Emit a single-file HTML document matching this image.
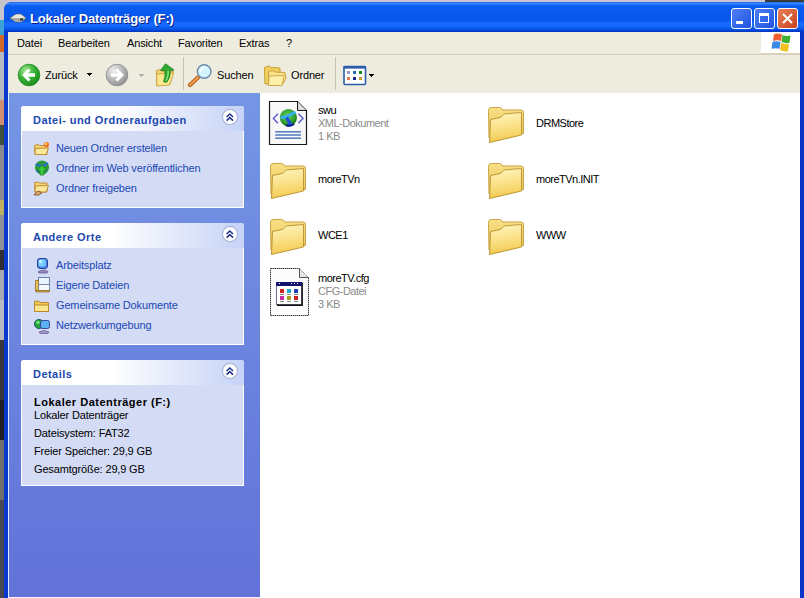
<!DOCTYPE html>
<html><head><meta charset="utf-8">
<style>
*{margin:0;padding:0;box-sizing:border-box}
html,body{width:804px;height:598px;overflow:hidden}
body{position:relative;background:#c9c4cf;font-family:"Liberation Sans",sans-serif;font-size:11px;color:#000}
.a{position:absolute}
.t{position:absolute;white-space:nowrap;line-height:13px;font-size:11px;letter-spacing:-0.15px}
#desk{left:0;top:0;width:6px;height:598px;background:linear-gradient(#c8c4cc 0,#c8c4cc 20px,#3aa0d8 20px,#3aa0d8 35px,#d06828 35px,#d06828 52px,#b8b8c0 52px,#b8b8c0 100px,#d09070 100px,#d09070 125px,#405040 125px,#405040 145px,#8a8a90 145px,#8a8a90 200px,#c0b060 200px,#c0b060 215px,#909098 215px,#909098 250px,#303030 250px,#303030 270px,#a8a8b0 270px,#a8a8b0 300px,#b8b8c0 300px,#b8b8c0 340px,#383838 340px,#383838 400px,#202020 400px,#202020 440px,#707068 440px,#707068 500px,#484850 500px)}
#topstrip{left:765px;top:0;width:39px;height:2px;background:#343c38}
#win{left:4px;top:2px;width:800px;height:600px;background:#0838cc;border-radius:8px 2px 0 0}
#title{left:4px;top:2px;width:800px;height:30px;border-radius:8px 2px 0 0;
 background:linear-gradient(#1a50d8 0px,#3a8cff 1px,#2a7aff 2px,#0a5cf0 4px,#0856ec 19px,#1a6cff 21px,#1468fa 24px,#0a5cf0 26px,#0850e0 28px,#0038c8 29px,#0038c8 30px)}
#ttext{left:30px;top:11px;color:#fff;font-weight:bold;font-size:13px;line-height:15px;text-shadow:1px 1px 0 #0a1e8a}
#menu{left:8px;top:32px;width:792px;height:22px;background:#eeecdf}
#menusep{left:8px;top:54px;width:792px;height:1px;background:#d8d2bd}
#tool{left:8px;top:55px;width:792px;height:38px;background:#eeecdf}
#logo{left:761px;top:32px;width:39px;height:22px;background:#fff}
#pane{left:8px;top:93px;width:252px;height:505px;background:linear-gradient(#7596e4,#6272d9)}
#paneline{left:8px;top:93px;width:1px;height:505px;background:#dceeff}
#botline{left:8px;top:597px;width:252px;height:1px;background:#f4f6fc}
#content{left:260px;top:93px;width:540px;height:505px;background:#fff}
#rborder{left:800px;top:32px;width:4px;height:566px;background:#0834c8}
.box{position:absolute;left:21px;width:223px;background:#fff;border-radius:3px 3px 0 0;overflow:hidden}
.body{position:absolute;left:1px;right:1px;top:25px;bottom:1px;background:#d3dbf5}
.hdr{position:absolute;left:0;top:0;width:223px;height:25px;background:linear-gradient(90deg,#fff 0%,#fff 40%,#c6d3f7 100%)}
.htext{position:absolute;left:12px;top:8px;font-weight:bold;letter-spacing:0.45px;color:#2048b0;font-size:11px;line-height:13px;white-space:nowrap}
.chev{position:absolute;left:202px;top:3px;width:16px;height:16px;border-radius:50%;background:#fff;box-shadow:0 0 1px 1px #b4c2e6}
.f{letter-spacing:-0.5px}
.link{color:#2148b4}
.btn{position:absolute;top:8px;width:21px;height:21px;border:1px solid #fff;border-radius:3px}
</style></head><body>
<div class="a" id="desk"></div>
<div class="a" id="topstrip"></div>
<div class="a" id="win"></div>
<div class="a" id="title"></div>
<div class="t" id="ttext">Lokaler Datenträger (F:)</div>
<div class="a" id="menu"></div>
<div class="a" id="menusep"></div>
<div class="a" id="tool"></div>
<div class="a" id="logo"></div>
<div class="a" id="pane"></div>
<div class="a" id="content"></div>
<div class="a" id="paneline"></div>
<div class="a" id="botline"></div>
<div class="a" id="rborder"></div>

<!-- menu -->
<div class="t" style="left:17px;top:37px">Datei</div>
<div class="t" style="left:58px;top:37px">Bearbeiten</div>
<div class="t" style="left:127px;top:37px">Ansicht</div>
<div class="t" style="left:178px;top:37px">Favoriten</div>
<div class="t" style="left:239px;top:37px">Extras</div>
<div class="t" style="left:286px;top:37px">?</div>

<!-- title buttons -->
<div class="btn" style="left:731px;background:linear-gradient(135deg,#5080f4,#1e54e0)"></div>
<div class="btn" style="left:754px;background:linear-gradient(135deg,#5080f4,#1e54e0)"></div>
<div class="btn" style="left:777px;background:linear-gradient(135deg,#e8835a,#c8401c)"></div>

<!-- toolbar texts -->
<div class="t" style="left:45px;top:69px">Zurück</div>
<div class="t" style="left:217px;top:69px">Suchen</div>
<div class="t" style="left:291px;top:69px">Ordner</div>


<!-- toolbar icons -->
<svg class="a" style="left:14px;top:60px" width="30" height="30">
 <defs><radialGradient id="gbk" cx="0.35" cy="0.3" r="0.75"><stop offset="0" stop-color="#a8ea98"/><stop offset="0.5" stop-color="#3cb43a"/><stop offset="1" stop-color="#188a1a"/></radialGradient></defs>
 <circle cx="15" cy="15" r="10.8" fill="url(#gbk)" stroke="#1e8a20" stroke-width="0.8"/>
 <path d="M8,15 L14.5,8.5 L16.5,10.5 L13.8,13.2 L21,13.2 L21,16.8 L13.8,16.8 L16.5,19.5 L14.5,21.5 Z" fill="#fff"/>
</svg>
<svg class="a" style="left:87px;top:73px" width="5" height="3"><rect x="0" y="0" width="5" height="1" fill="#000"/><rect x="1" y="1" width="3" height="1" fill="#000"/><rect x="2" y="2" width="1" height="1" fill="#000"/></svg>
<svg class="a" style="left:102px;top:60px" width="30" height="30">
 <defs><radialGradient id="gfw" cx="0.35" cy="0.3" r="0.75"><stop offset="0" stop-color="#f0f0f0"/><stop offset="0.5" stop-color="#bdbdbd"/><stop offset="1" stop-color="#909090"/></radialGradient></defs>
 <circle cx="15" cy="15" r="10.8" fill="url(#gfw)" stroke="#8a8a8a" stroke-width="0.8"/>
 <path d="M22,15 L15.5,8.5 L13.5,10.5 L16.2,13.2 L9,13.2 L9,16.8 L16.2,16.8 L13.5,19.5 L15.5,21.5 Z" fill="#fff"/>
</svg>
<svg class="a" style="left:139px;top:74px" width="5" height="3"><rect x="0" y="0" width="5" height="1" fill="#b0b0b0"/><rect x="1" y="1" width="3" height="1" fill="#b0b0b0"/><rect x="2" y="2" width="1" height="1" fill="#b0b0b0"/></svg>
<svg class="a" style="left:150px;top:60px" width="30" height="30">
 <path d="M6.5,10.5 L10.5,9.5 L12.5,11 L23.5,11.5 L20,24.5 L6.5,25.5 Z" fill="#f4d870" stroke="#c8a040"/>
 <path d="M6.8,14 L23.8,13 L19.5,25 L6.8,26 Z" fill="#fbe890" stroke="#d0a848"/>
 <path d="M15.5,3.8 L10.6,10.6 L15,10.6 Q15.6,17 13.6,21.8 L16.8,22.2 Q21,17 20.2,10.3 L24,10.1 Z" fill="#30aa30" stroke="#127a18" stroke-width="0.8"/>
 <path d="M18.2,11 Q18.6,16.5 15.8,21" stroke="#90e888" stroke-width="1.2" fill="none"/>
</svg>
<div class="a" style="left:183px;top:57px;width:1px;height:33px;background:#c8c4b0"></div>
<svg class="a" style="left:185px;top:60px" width="30" height="30">
 <path d="M5,25 L13,17.5" stroke="#b86020" stroke-width="4.4" stroke-linecap="round"/>
 <path d="M5,25 L13,17.5" stroke="#f0a050" stroke-width="2" stroke-linecap="round"/>
 <circle cx="19.2" cy="11.5" r="6.8" fill="#d2f4ff" stroke="#6f8aa8" stroke-width="1.4"/>
 <path d="M15,12 Q16,8 20,7.5" stroke="#fff" stroke-width="1.3" fill="none"/>
</svg>
<svg class="a" style="left:260px;top:60px" width="30" height="30">
 <path d="M4.5,7.5 L9,6 L11,7.5 L20,8 L20,24 L5,24 Z" fill="#f2d060" stroke="#c8a030"/>
 <path d="M8.5,11.5 L13,10.5 L15,12 L25,12.5 L26,18 L22,25.5 L8.5,25.5 Z" fill="#fbe48a" stroke="#c8a040"/>
 <path d="M9,16 L24,15.5 L22,25.5 L8.5,25.5 Z" fill="#fdf0a8" stroke="#d0a848"/>
</svg>
<div class="a" style="left:335px;top:57px;width:1px;height:33px;background:#c8c4b0"></div>
<svg class="a" style="left:340px;top:60px" width="30" height="30">
 <rect x="4" y="6.5" width="21.5" height="18" rx="1" fill="#fff" stroke="#2a5caa" stroke-width="1.6"/>
 <rect x="3.5" y="6" width="22.5" height="2.6" fill="#2a5caa"/>
 <rect x="7" y="11" width="3" height="3" fill="#9a96c8"/><rect x="13" y="11" width="3" height="3" fill="#2266c0"/><rect x="19" y="11" width="3" height="3" fill="#148a28"/>
 <rect x="7" y="17" width="3" height="3" fill="#e07848"/><rect x="13" y="17" width="3" height="3" fill="#142a88"/><rect x="19" y="17" width="3" height="3" fill="#c89a38"/>
</svg>
<svg class="a" style="left:369px;top:74px" width="5" height="3"><rect x="0" y="0" width="5" height="1" fill="#000"/><rect x="1" y="1" width="3" height="1" fill="#000"/><rect x="2" y="2" width="1" height="1" fill="#000"/></svg>

<!-- title drive icon -->
<svg class="a" style="left:8px;top:10px" width="20" height="16">
 <path d="M2,8 L8,4 L13,4 L18,8 L13,12 L8,12 Z" fill="#e8e8e0" stroke="#606060" stroke-width="0.6"/>
 <path d="M2,8 L18,8 L13,12 L8,12 Z" fill="#a8a8a0"/>
 <rect x="12" y="8.5" width="3" height="2" fill="#303030"/>
</svg>

<!-- windows logo -->
<svg class="a" style="left:761px;top:32px" width="39" height="22">
 <path d="M13,2 Q17,1 21,2.5 L20,9 Q16,7.5 12,9 Z" fill="#f06030"/>
 <path d="M21.5,3 Q25.5,4.5 29.5,3.5 L28.5,10.8 Q24.5,11.8 20.5,10 Z" fill="#40b030"/>
 <path d="M11.5,9.8 Q15.5,8.5 19.5,10 L18.5,16.8 Q14.5,15.5 10.5,16.8 Z" fill="#3a8ae8"/>
 <path d="M20,11 Q24,12.8 28,11.8 L27,19.2 Q23,20 19,18 Z" fill="#f0c020"/>
</svg>
<div class="a" style="left:761px;top:53px;width:39px;height:1px;background:#d8d2bd"></div>

<!-- title glyphs -->
<div class="a" style="left:736px;top:21px;width:7px;height:3px;background:#fff"></div>
<div class="a" style="left:759px;top:13px;width:10px;height:10px;border:1px solid #fff;border-top-width:3px"></div>
<svg class="a" style="left:777px;top:8px" width="21" height="21"><path d="M6,6 L15,15 M15,6 L6,15" stroke="#fff" stroke-width="2"/></svg>

<!-- task pane boxes -->
<div class="box" style="top:106px;height:102px">
 <div class="hdr"></div><div class="body"></div>
 <div class="htext">Datei- und Ordneraufgaben</div>
 <svg class="chev2" width="20" height="20" style="position:absolute;left:199px;top:1px"><circle cx="10" cy="10" r="7.6" fill="#fff" stroke="#aab4d8" stroke-width="1.2"/><path d="M6.6,10 L9.8,7 L13,10 M6.6,13.6 L9.8,10.6 L13,13.6" stroke="#1e2f86" stroke-width="1.5" fill="none"/></svg>

 <svg style="position:absolute;left:12px;top:34px" width="18" height="18"><path d="M1.5,5.5 L5,4.5 L6.5,5.5 L14,5.5 L14,14.5 L2,14.5 Z" fill="#f2d070" stroke="#c09038"/><path d="M2.5,8.5 L15.5,8 L13,14.5 L2,14.5 Z" fill="#fbe89a" stroke="#c09038"/><circle cx="13.5" cy="4.5" r="2.6" fill="#f07020"/><circle cx="13" cy="4" r="1.2" fill="#ffd060"/></svg>
 <svg style="position:absolute;left:12px;top:53px" width="18" height="18"><circle cx="9" cy="8.5" r="7" fill="#2a9a3a"/><path d="M3,5 Q9,9 15,4 M4,13 Q9,7 14,12" stroke="#2a6ad8" stroke-width="2" fill="none"/><path d="M9,6 L14,11.5 L11,11.5 L11,16 L7,16 L7,11.5 L4,11.5 Z" fill="#3ac83a" stroke="#1a7a1a" stroke-width="0.7"/></svg>
 <svg style="position:absolute;left:12px;top:73px" width="18" height="18"><path d="M1.5,3.5 L5,3 L6.5,4 L14,4 L14,13 L2,13 Z" fill="#f2d070" stroke="#c09038"/><path d="M2.5,7 L15.5,6.5 L13,13 L2,13 Z" fill="#fbe89a" stroke="#c09038"/><path d="M1,16 Q3,12 6,12 L9,14 L6,16 Z" fill="#d8a868" stroke="#704020" stroke-width="0.7"/></svg>
 <div class="t link" style="left:35px;top:36px">Neuen Ordner erstellen</div>
 <div class="t link" style="left:35px;top:56px">Ordner im Web veröffentlichen</div>
 <div class="t link" style="left:35px;top:76px">Ordner freigeben</div>
</div>
<div class="box" style="top:223px;height:122px">
 <div class="hdr"></div><div class="body"></div>
 <div class="htext">Andere Orte</div>
 <svg class="chev2" width="20" height="20" style="position:absolute;left:199px;top:1px"><circle cx="10" cy="10" r="7.6" fill="#fff" stroke="#aab4d8" stroke-width="1.2"/><path d="M6.6,10 L9.8,7 L13,10 M6.6,13.6 L9.8,10.6 L13,13.6" stroke="#1e2f86" stroke-width="1.5" fill="none"/></svg>

 <svg style="position:absolute;left:13px;top:33px" width="18" height="18"><rect x="3.5" y="2.5" width="10" height="10" rx="2.5" fill="#4a8ae8" stroke="#28409a" stroke-width="1"/><rect x="4.5" y="3.5" width="7" height="7" rx="2" fill="#7ad0ff"/><circle cx="6.5" cy="5.5" r="1.6" fill="#c8f4ff"/><path d="M4,16 Q9,12.5 14,15.5 L13,17 L5,17 Z" fill="#9890c0" stroke="#605890" stroke-width="0.8"/></svg>
 <svg style="position:absolute;left:12px;top:53px" width="18" height="18"><rect x="5.5" y="1.5" width="11" height="7" fill="#e8f4ff" stroke="#4a6a9a" stroke-width="0.8"/><path d="M2.5,4.5 L5.5,4.5 L5.5,14.5 L2.5,14.5 Z" fill="#e8c050" stroke="#906820" stroke-width="0.8"/><rect x="5.5" y="8.5" width="11" height="6" fill="#f4f8ff" stroke="#6a7aa0" stroke-width="0.8"/><path d="M2.5,14.5 L17,14.5 L16,16 L3,16 Z" fill="#d8b040" stroke="#8a6a20" stroke-width="0.7"/></svg>
 <svg style="position:absolute;left:12px;top:74px" width="18" height="18"><path d="M1.5,4.5 L5.5,4 L7,5.5 L15.5,5.5 L15.5,14.5 L1.5,14.5 Z" fill="#f2c850" stroke="#b88830"/><path d="M1.5,8 L15.5,8 L15.5,14.5 L1.5,14.5 Z" fill="#fbe48a" stroke="#b88830"/></svg>
 <svg style="position:absolute;left:12px;top:93px" width="18" height="18"><circle cx="6" cy="8" r="4.6" fill="#22a040" stroke="#104a60" stroke-width="0.8"/><circle cx="5" cy="6.5" r="1.8" fill="#70e070"/><rect x="7.5" y="4.5" width="9" height="8" rx="2" fill="#5ab0f0" stroke="#303a90" stroke-width="0.9"/><path d="M6,16 Q11,13 16,16 L15,17.5 L7,17.5 Z" fill="#a098c8" stroke="#605890" stroke-width="0.7"/></svg>
 <div class="t link" style="left:35px;top:36px">Arbeitsplatz</div>
 <div class="t link" style="left:35px;top:56px">Eigene Dateien</div>
 <div class="t link" style="left:35px;top:76px">Gemeinsame Dokumente</div>
 <div class="t link" style="left:35px;top:96px">Netzwerkumgebung</div>
</div>
<div class="box" style="top:360px;height:126px">
 <div class="hdr"></div><div class="body"></div>
 <div class="htext">Details</div>
 <svg class="chev2" width="20" height="20" style="position:absolute;left:199px;top:1px"><circle cx="10" cy="10" r="7.6" fill="#fff" stroke="#aab4d8" stroke-width="1.2"/><path d="M6.6,10 L9.8,7 L13,10 M6.6,13.6 L9.8,10.6 L13,13.6" stroke="#1e2f86" stroke-width="1.5" fill="none"/></svg>
 <div class="t" style="left:13px;top:36px;font-weight:bold;letter-spacing:0.5px">Lokaler Datenträger (F:)</div>
 <div class="t" style="left:13px;top:49px">Lokaler Datenträger</div>
 <div class="t" style="left:13px;top:67px">Dateisystem: FAT32</div>
 <div class="t" style="left:13px;top:85px">Freier Speicher: 29,9 GB</div>
 <div class="t" style="left:13px;top:103px">Gesamtgröße: 29,9 GB</div>
</div>


<!-- folder defs -->
<svg width="0" height="0" style="position:absolute">
 <defs>
  <linearGradient id="fgF" x1="0" y1="0" x2="0.15" y2="1">
   <stop offset="0" stop-color="#fff4c0"/><stop offset="0.5" stop-color="#fbe38c"/><stop offset="1" stop-color="#f2cb52"/>
  </linearGradient>
  <linearGradient id="fgB" x1="0" y1="0" x2="0" y2="1">
   <stop offset="0" stop-color="#f9e088"/><stop offset="1" stop-color="#eac450"/>
  </linearGradient>
  
 </defs>
</svg>
<svg class="a" style="left:265px;top:158px" width="44" height="44"><path d="M5.5,8.5 Q5.5,5.5 8.5,5.5 L16.5,5.5 Q18,5.5 19,7 L19.5,8 L38,8 Q40.5,8 40.5,10.5 L40.5,31.5 L6,36 Z" fill="url(#fgB)" stroke="#c8a444" stroke-width="1"/>
   <path d="M7.5,17.5 L17,15.5 Q18.5,15 19.5,13.5 Q20.5,12 22.5,11.8 L38.5,10.5 L38.5,33 L6.5,40.5 Z" fill="url(#fgF)" stroke="#bc9838" stroke-width="1"/></svg>
<svg class="a" style="left:483px;top:102px" width="44" height="44"><path d="M5.5,8.5 Q5.5,5.5 8.5,5.5 L16.5,5.5 Q18,5.5 19,7 L19.5,8 L38,8 Q40.5,8 40.5,10.5 L40.5,31.5 L6,36 Z" fill="url(#fgB)" stroke="#c8a444" stroke-width="1"/>
   <path d="M7.5,17.5 L17,15.5 Q18.5,15 19.5,13.5 Q20.5,12 22.5,11.8 L38.5,10.5 L38.5,33 L6.5,40.5 Z" fill="url(#fgF)" stroke="#bc9838" stroke-width="1"/></svg>
<svg class="a" style="left:483px;top:158px" width="44" height="44"><path d="M5.5,8.5 Q5.5,5.5 8.5,5.5 L16.5,5.5 Q18,5.5 19,7 L19.5,8 L38,8 Q40.5,8 40.5,10.5 L40.5,31.5 L6,36 Z" fill="url(#fgB)" stroke="#c8a444" stroke-width="1"/>
   <path d="M7.5,17.5 L17,15.5 Q18.5,15 19.5,13.5 Q20.5,12 22.5,11.8 L38.5,10.5 L38.5,33 L6.5,40.5 Z" fill="url(#fgF)" stroke="#bc9838" stroke-width="1"/></svg>
<svg class="a" style="left:265px;top:214px" width="44" height="44"><path d="M5.5,8.5 Q5.5,5.5 8.5,5.5 L16.5,5.5 Q18,5.5 19,7 L19.5,8 L38,8 Q40.5,8 40.5,10.5 L40.5,31.5 L6,36 Z" fill="url(#fgB)" stroke="#c8a444" stroke-width="1"/>
   <path d="M7.5,17.5 L17,15.5 Q18.5,15 19.5,13.5 Q20.5,12 22.5,11.8 L38.5,10.5 L38.5,33 L6.5,40.5 Z" fill="url(#fgF)" stroke="#bc9838" stroke-width="1"/></svg>
<svg class="a" style="left:483px;top:214px" width="44" height="44"><path d="M5.5,8.5 Q5.5,5.5 8.5,5.5 L16.5,5.5 Q18,5.5 19,7 L19.5,8 L38,8 Q40.5,8 40.5,10.5 L40.5,31.5 L6,36 Z" fill="url(#fgB)" stroke="#c8a444" stroke-width="1"/>
   <path d="M7.5,17.5 L17,15.5 Q18.5,15 19.5,13.5 Q20.5,12 22.5,11.8 L38.5,10.5 L38.5,33 L6.5,40.5 Z" fill="url(#fgF)" stroke="#bc9838" stroke-width="1"/></svg>

<!-- XML doc -->
<svg class="a" style="left:264px;top:96px" width="48" height="54">
 <defs><radialGradient id="gl" cx="0.45" cy="0.4" r="0.65"><stop offset="0" stop-color="#6fd060"/><stop offset="0.7" stop-color="#2a9a2a"/><stop offset="1" stop-color="#0a5a18"/></radialGradient></defs>
 <path d="M5.5,5.5 L33.5,5.5 L42.5,14.5 L42.5,48.5 L5.5,48.5 Z" fill="#f8f8f8" stroke="#1a1a1a" stroke-width="1.2"/>
 <path d="M33.5,5.5 L33.5,14.5 L42.5,14.5" fill="#dcdcdc" stroke="#1a1a1a"/>
 <circle cx="24.4" cy="21.6" r="8.6" fill="url(#gl)"/>
 <path d="M16.5,21.5 Q22,22 31.5,16" stroke="#38b0f0" stroke-width="3" fill="none"/>
 <path d="M22.5,21.5 Q25,25 27,30" stroke="#2050d8" stroke-width="3.4" fill="none"/>
 <path d="M22,29 Q26,31 30,28" stroke="#0a1a90" stroke-width="2" fill="none"/>
 <path d="M14,17.8 L9.4,22.5 L14,27.2" stroke="#5858d0" stroke-width="1.4" fill="none"/>
 <path d="M34.4,17.8 L39,22.5 L34.4,27.2" stroke="#5858d0" stroke-width="1.4" fill="none"/>
 <rect x="11.3" y="35" width="25.7" height="1.6" fill="#5a80c0"/>
 <rect x="11.3" y="38.2" width="25.7" height="1.6" fill="#5a80c0"/>
 <rect x="11.3" y="41.4" width="25.7" height="1.6" fill="#5a80c0"/>
</svg>

<!-- CFG doc -->
<svg class="a" style="left:264px;top:262px" width="50" height="58">
 <path d="M6.5,6.5 L35.5,6.5 L44.5,15.5 L44.5,53.5 L6.5,53.5 Z" fill="#fcfcfc" stroke="#3a3a3a" stroke-dasharray="1.5 0.5"/>
 <path d="M35.5,6.5 L35.5,15.5 L44.5,15.5" fill="#e4e4e4" stroke="#555"/>
 <rect x="12.5" y="20.5" width="25" height="22" fill="#fff" stroke="#6a6a8a"/><path d="M13,43.2 L38.2,43.2 L38.2,20.5" stroke="#111" stroke-width="1.4" fill="none"/>
 <rect x="12" y="20" width="26" height="4" fill="#141470"/>
 <rect x="15" y="21" width="1" height="1" fill="#fff"/><rect x="27" y="21" width="1" height="1" fill="#fff"/><rect x="30" y="21" width="1" height="1" fill="#fff"/><rect x="33" y="21" width="1" height="1" fill="#fff"/>
 <rect x="16" y="27" width="4" height="4" fill="#d42020"/><rect x="23" y="27" width="4" height="4" fill="#20a8c8"/><rect x="30" y="27" width="4" height="4" fill="#2040b8"/>
 <rect x="16" y="34" width="4" height="4" fill="#c82aa8"/><rect x="23" y="34" width="4" height="4" fill="#a8a020"/><rect x="30" y="34" width="4" height="4" fill="#c82020"/>
 <rect x="16" y="32" width="4" height="1" fill="#888"/><rect x="23" y="32" width="4" height="1" fill="#888"/><rect x="30" y="32" width="4" height="1" fill="#888"/>
 <rect x="16" y="39" width="4" height="1" fill="#888"/><rect x="23" y="39" width="4" height="1" fill="#888"/><rect x="30" y="39" width="4" height="1" fill="#888"/>
</svg>

<!-- files -->
<div class="t f" style="left:318px;top:104px">swu</div>
<div class="t f" style="left:318px;top:117px;color:#8a8a8a">XML-Dokument</div>
<div class="t f" style="left:318px;top:130px;color:#8a8a8a">1 KB</div>
<div class="t f" style="left:536px;top:117px">DRMStore</div>
<div class="t f" style="left:318px;top:173px">moreTVn</div>
<div class="t f" style="left:536px;top:173px">moreTVn.INIT</div>
<div class="t f" style="left:318px;top:229px">WCE1</div>
<div class="t f" style="left:536px;top:229px">WWW</div>
<div class="t f" style="left:318px;top:272px">moreTV.cfg</div>
<div class="t f" style="left:318px;top:285px;color:#8a8a8a">CFG-Datei</div>
<div class="t f" style="left:318px;top:298px;color:#8a8a8a">3 KB</div>
</body></html>
